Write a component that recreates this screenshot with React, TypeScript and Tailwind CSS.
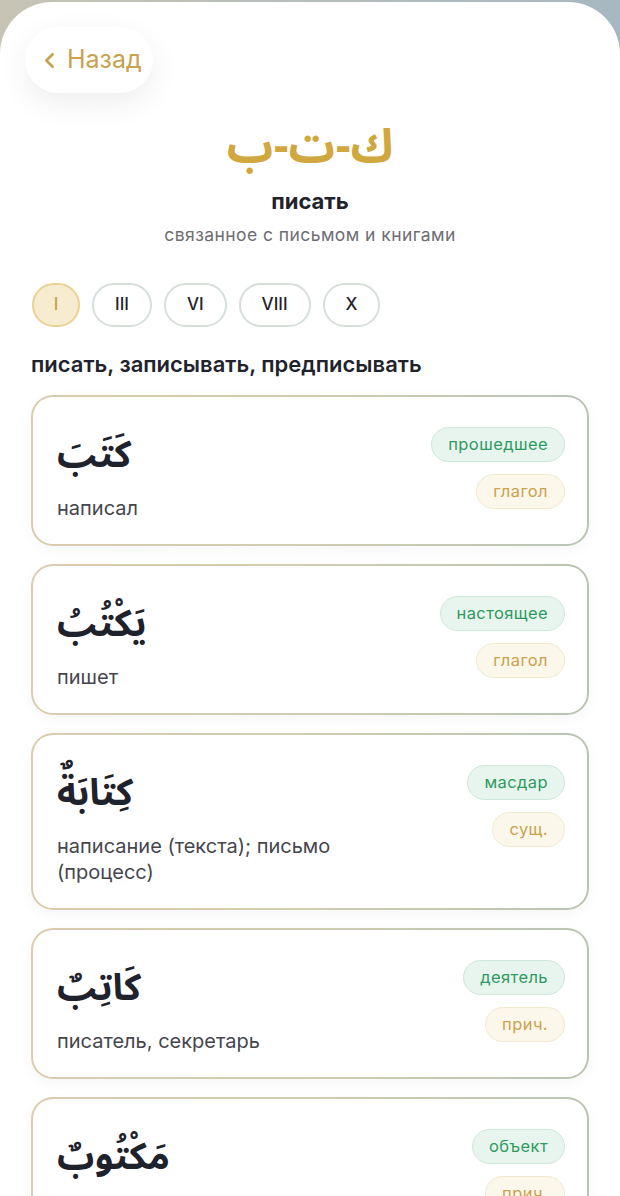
import { ChevronLeft } from "lucide-react";

type Entry = {
  word: string;
  meaning: string;
  kind: string;
  pos: string;
};

const forms = ["I", "III", "VI", "VIII", "X"];

const entries: Entry[] = [
  { word: "كَتَبَ", meaning: "написал", kind: "прошедшее", pos: "глагол" },
  { word: "يَكْتُبُ", meaning: "пишет", kind: "настоящее", pos: "глагол" },
  {
    word: "كِتَابَةٌ",
    meaning: "написание (текста); письмо (процесс)",
    kind: "масдар",
    pos: "сущ.",
  },
  { word: "كَاتِبٌ", meaning: "писатель, секретарь", kind: "деятель", pos: "прич." },
  { word: "مَكْتُوبٌ", meaning: "написанное, письмо", kind: "объект", pos: "прич." },
];

const arabicFont = "font-['Noto_Sans_Arabic','DejaVu_Sans',sans-serif]";

function WordCard({ entry }: { entry: Entry }) {
  return (
    <div className="rounded-[22px] bg-gradient-to-r from-[#dccbae] via-[#cfcdb0] to-[#b9c4b4] p-[2px] shadow-[0_4px_14px_rgba(0,0,0,0.04)]">
      <div className="flex gap-4 rounded-[20px] bg-white pl-6 pr-[22px] pt-[30px] pb-[23px]">
        <div className="flex-1">
          <p dir="rtl" className={`${arabicFont} mt-[2px] text-left text-[37px] font-bold leading-[52px] text-[#1e222c]`}>
            {entry.word}
          </p>
          <p className="mt-[14px] max-w-[330px] text-[20px] leading-[26px] text-[#45464d]">{entry.meaning}</p>
        </div>
        <div className="flex flex-col items-end gap-3">
          <span className="rounded-full border border-[#cfe7d9] bg-[#e8f5ee] px-4 py-[6px] text-[16.5px] leading-[21px] tracking-wide text-[#2e9a60]">
            {entry.kind}
          </span>
          <span className="rounded-full border border-[#f2e9cf] bg-[#fbf7ea] px-4 py-[6px] text-[16.5px] leading-[21px] tracking-wide text-[#cba24e]">
            {entry.pos}
          </span>
        </div>
      </div>
    </div>
  );
}

export default function App() {
  return (
    <div className="min-h-screen bg-gradient-to-r from-[#c7c4b6] to-[#a7b7c1] pt-[2px] font-['Inter','Liberation_Sans',sans-serif]">
      <div className="min-h-[1194px] overflow-hidden rounded-t-[52px] bg-white px-[31px] pt-[25px]">
        <button className="-ml-[6px] flex h-[66px] w-[128px] items-center gap-[5px] rounded-full bg-white pl-[12px] text-[25px] text-[#c9a14f] shadow-[0_10px_30px_rgba(0,0,0,0.07)]">
          <ChevronLeft size={25} strokeWidth={2.5} />
          <span>Назад</span>
        </button>

        <div className="mt-[25px] flex flex-col items-center">
          <h1 dir="rtl" className={`${arabicFont} text-[46px] font-bold leading-[60px] text-[#d1a83f]`}>
            ك-ت-ب
          </h1>
          <p className="mt-[9px] text-[22px] font-bold leading-[28px] text-[#1f232d]">писать</p>
          <p className="mt-[7px] text-[17.5px] leading-[26px] tracking-wide text-[#6d6d72]">
            связанное с письмом и книгами
          </p>
        </div>

        <div className="mt-[35px] flex gap-3">
          {forms.map((f, i) => (
            <button
              key={f}
              className={
                i === 0
                  ? "ml-px h-[44px] min-w-[48px] rounded-full border-2 border-[#ead293] bg-[#f7ebd0] px-4 text-[17px] font-medium text-[#c9a14f]"
                  : "h-[44px] min-w-[48px] rounded-full border-2 border-[#d7dfd9] bg-white px-[21px] text-[17px] font-medium text-[#1f232d]"
              }
            >
              {f}
            </button>
          ))}
        </div>

        <h2 className="mt-[23px] text-[22px] font-semibold leading-[28px] text-[#1f232d]">
          писать, записывать, предписывать
        </h2>

        <div className="mt-[17px] flex flex-col gap-[18px]">
          {entries.map((e) => (
            <WordCard key={e.word} entry={e} />
          ))}
        </div>
      </div>
    </div>
  );
}
